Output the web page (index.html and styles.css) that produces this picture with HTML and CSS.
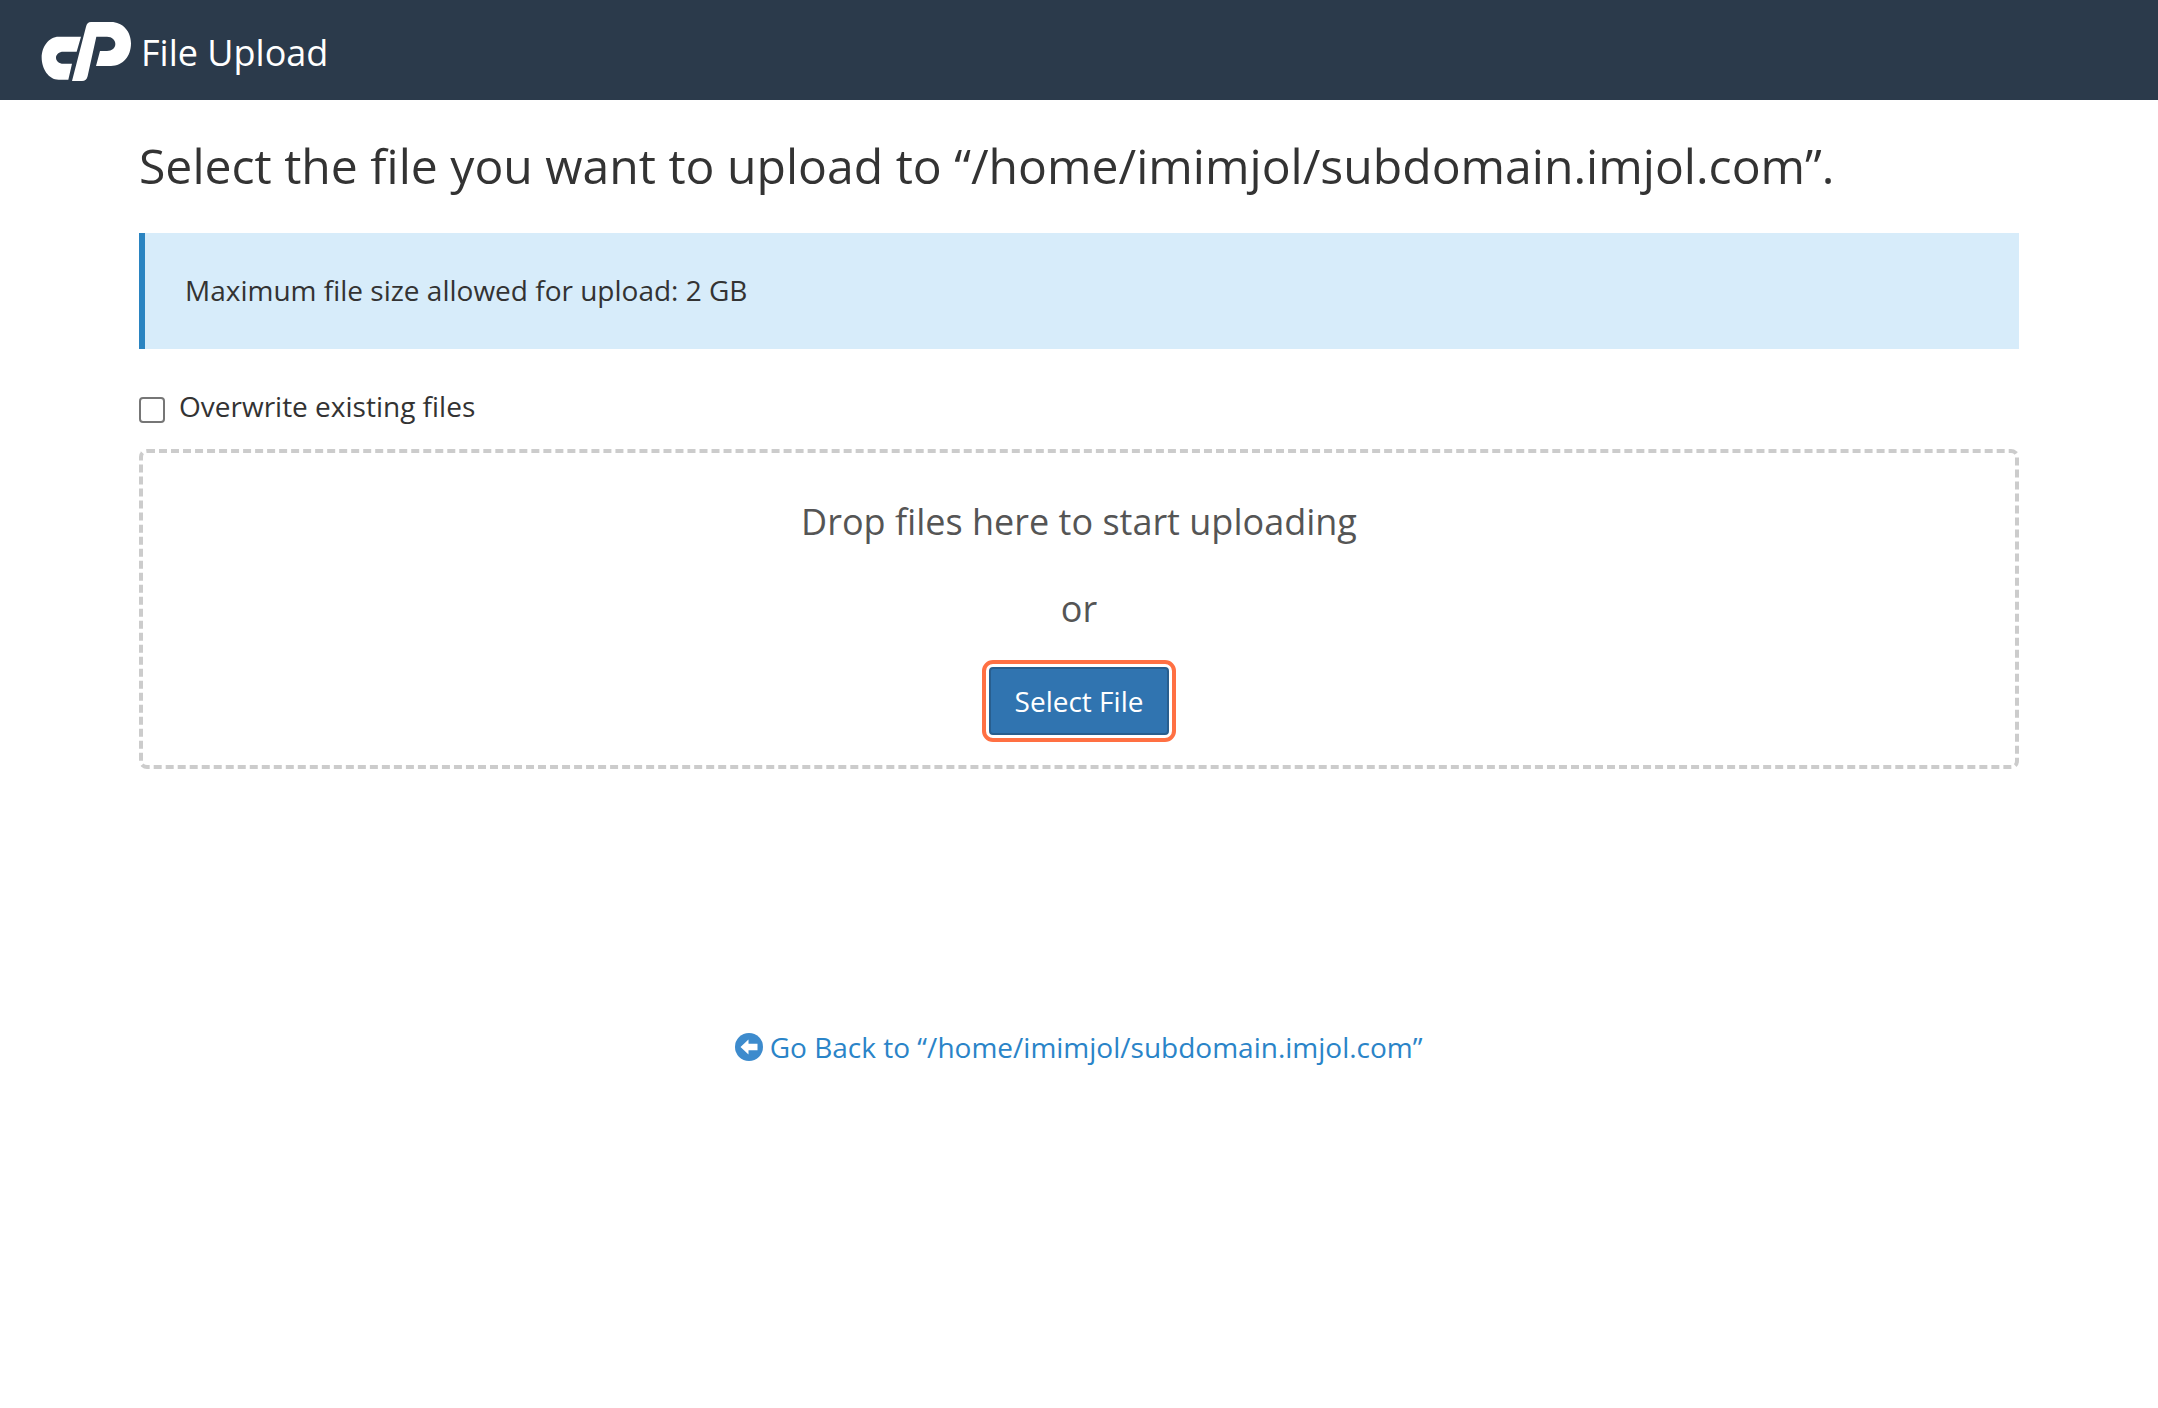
FILE: index.html
```html
<!DOCTYPE html>
<html lang="en">
<head>
    <meta charset="UTF-8">
    <meta name="viewport" content="width=device-width, initial-scale=1.0">
    <title>File Upload</title>
    <link rel="stylesheet" href="styles.css">
</head>
<body>
    <header class="topbar">
        <svg class="logo" viewBox="0 0 300 210" aria-hidden="true">
            <path d="M68 62H135L122 107H82C69 107 60 115 60 125C60 135 69 143 82 143H108L97 191H68C38 191 17 158 17 125C17 92 38 62 68 62Z"/>
            <path d="M165 18H225C260 18 285 46 285 82C285 122 260 150 225 150H180L192 105H213C228 105 238 96 238 84C238 72 228 62 213 62H181L155 180C153 190 147 195 138 195H108L150 32C152 23 157 18 165 18Z"/>
        </svg>
        <span class="topbar-title">File Upload</span>
    </header>

    <main class="container">
        <h1>Select the file you want to upload to “/home/imimjol/subdomain.imjol.com”.</h1>

        <div class="alert-info">Maximum file size allowed for upload: 2 GB</div>

        <label class="overwrite">
            <input type="checkbox">
            <span>Overwrite existing files</span>
        </label>

        <div class="dropzone">
            <div class="drop-text">Drop files here to start uploading</div>
            <div class="drop-or">or</div>
            <button class="select-button">Select File</button>
        </div>

        <div class="back">
            <a href="#">
                <svg class="back-icon" viewBox="0 0 28 28" aria-hidden="true">
                    <circle cx="14" cy="14" r="14" fill="#3d8bcd"/>
                    <path d="M5.5 14L13.5 6.5V10.8H22.5V17.2H13.5V21.5Z" fill="#fff"/>
                </svg>
                Go Back to “/home/imimjol/subdomain.imjol.com”
            </a>
        </div>
    </main>
</body>
</html>
```

FILE: styles.css
```css
body {
    font-family: "Open Sans", "Noto Sans", sans-serif;
    margin: 0;
    background: #fff;
    color: #333;
    font-size: 28px;
}
.topbar {
    height: 100px;
    box-sizing: border-box;
    background: #2b3a4b;
    display: flex;
    align-items: center;
    padding: 2px 0 0 36px;
    gap: 5px;
}
.logo {
    width: 100px;
    height: 70px;
    fill: #fff;
}
.topbar-title {
    color: #fff;
    font-size: 36px;
    margin-top: 2px;
}
.container {
    margin: 0 139px;
}
h1 {
    font-size: 48.1px;
    font-weight: 400;
    line-height: 64px;
    margin: 0;
    padding-top: 34px;
    color: #333;
}
.alert-info {
    margin-top: 35px;
    height: 116px;
    box-sizing: border-box;
    background: #d7ecfa;
    border-left: 6px solid #2a84c1;
    padding: 0 0 2px 40px;
    line-height: 114px;
    color: #333;
}
.overwrite {
    display: flex;
    align-items: center;
    gap: 14px;
    margin-top: 37px;
    height: 40px;
}
.overwrite input {
    appearance: none;
    width: 26px;
    height: 26px;
    margin: 7px 0 0;
    box-sizing: border-box;
    background: #fff;
    border: 2px solid #767676;
    border-radius: 4px;
}
.dropzone {
    margin-top: 23px;
    height: 320px;
    box-sizing: border-box;
    border: 4px dashed #ccc;
    border-radius: 8px;
    text-align: center;
    color: #555;
    padding-top: 45px;
}
.drop-text, .drop-or {
    font-size: 36px;
    line-height: 48px;
}
.drop-or {
    margin-top: 39px;
}
.select-button {
    display: block;
    margin: 34px auto 0;
    width: 180px;
    height: 68px;
    box-sizing: border-box;
    background: #3074b0;
    border: 2px solid #285e8e;
    border-radius: 4px;
    color: #fff;
    font-family: inherit;
    font-size: 28px;
    outline: 4px solid #ff7043;
    outline-offset: 3px;
}
.back {
    margin-top: 259px;
    text-align: center;
}
.back a {
    color: #2a84c8;
    text-decoration: none;
}
.back-icon {
    width: 28px;
    height: 28px;
    vertical-align: -3px;
    margin-right: -1px;
}
```
